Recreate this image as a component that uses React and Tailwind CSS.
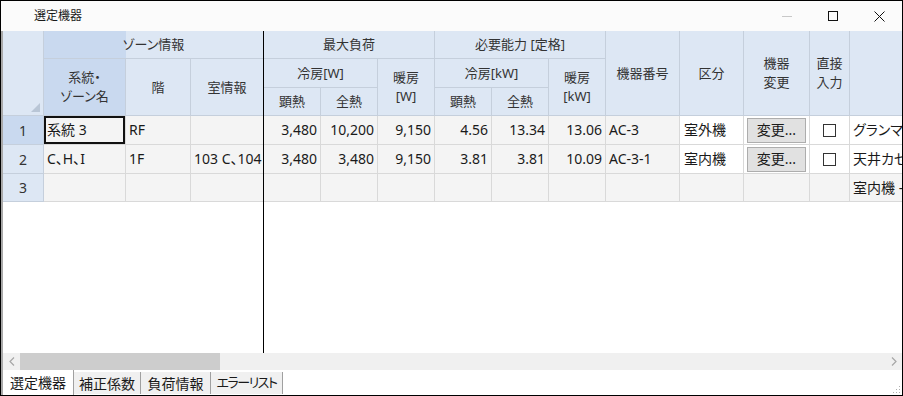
import React from 'react';

const font = "font-['Noto_Sans','Noto_Sans_CJK_JP',sans-serif] [font-feature-settings:'palt']";

function Hd({ children, last, dark, className = '' }) {
    return (
        <div
            className={`flex items-center justify-center text-center border-b border-[#c5cfdc] text-[13px] leading-[19px] text-[#333] whitespace-nowrap ${last ? '' : 'border-r'} ${dark ? 'bg-[#c9d9ef]' : 'bg-[#dde7f4]'} ${className}`}
        >
            {children}
        </div>
    );
}

// row number cell on the left
function RowNo({ n, dark }) {
    return (
        <div className={`border-r border-b border-[#c5cfdc] ${dark ? 'bg-[#c9d9ef]' : 'bg-[#dde7f4]'}`}>
            <div className="w-full h-full flex items-center justify-center text-[14px] text-[#333]">{n}</div>
        </div>
    );
}

function Cell({ children, right, last, white, className = '' }) {
    return (
        <div
            className={`flex items-center px-[3px] border-b border-[#d9d9d9] text-[14px] leading-[18px] text-[#1a1a1a] whitespace-nowrap overflow-hidden ${last ? '' : 'border-r'} ${white ? 'bg-white' : 'bg-[#f4f4f4]'} ${right ? 'justify-end' : ''} ${className}`}
        >
            {children}
        </div>
    );
}

const ChangeButton = () => (
    <div className="flex items-center justify-center w-[62px] h-[25px] bg-[#e1e1e1] border border-[#adadad] text-[14px] leading-none text-[#1a1a1a]">
        変更...
    </div>
);

const Check = () => <div className="w-[13px] h-[13px] border border-[#333] bg-white" />;

const rows = [
    {
        no: '1', name: '系統 3', floor: 'RF', room: '',
        vals: ['3,480', '10,200', '9,150', '4.56', '13.34', '13.06'],
        id: 'AC-3', kind: '室外機', model: 'グランマルチ',
    },
    {
        no: '2', name: 'C、H、I', floor: '1F', room: '103 C、104',
        vals: ['3,480', '3,480', '9,150', '3.81', '3.81', '10.09'],
        id: 'AC-3-1', kind: '室内機', model: '天井カセット',
    },
];

export default function App() {
    return (
        <div className={`w-[903px] h-[396px] border border-black flex flex-col overflow-hidden bg-white ${font}`}>
            {/* title bar */}
            <div className="h-[30px] shrink-0 flex items-center bg-[#fbfbfb]">
                <span className="pl-[33px] text-[12px] text-[#1a1a1a]">選定機器</span>
                <div className="ml-auto flex h-full">
                    <div className="w-[46px] flex items-center justify-center">
                        <svg width="10" height="10" viewBox="0 0 10 10"><path d="M0 5.5h10" stroke="#c8c8c8" strokeWidth="1" /></svg>
                    </div>
                    <div className="w-[46px] flex items-center justify-center">
                        <svg width="10" height="10" viewBox="0 0 10 10"><rect x="0.5" y="0.5" width="9" height="9" fill="none" stroke="#111" strokeWidth="1" /></svg>
                    </div>
                    <div className="w-[46px] flex items-center justify-center">
                        <svg width="11" height="11" viewBox="0 0 11 11"><path d="M0.5 0.5l10 10M10.5 0.5l-10 10" stroke="#111" strokeWidth="1" /></svg>
                    </div>
                </div>
            </div>

            <div className="flex-1 min-h-0 flex flex-col border-l-2 border-[#a9a9a9]">
                {/* grid */}
                <div className="flex-1 min-h-0 flex overflow-hidden">
                    {/* frozen pane */}
                    <div className="shrink-0 border-r border-black">
                        <div className="grid grid-cols-[41px_82px_65px_72px] grid-rows-[28px_29px_28px_29px_29px_28px]">
                            <Hd className="row-span-3 relative">
                                <svg className="absolute right-[3px] bottom-[3px]" width="9" height="9" viewBox="0 0 9 9"><path d="M9 0V9H0Z" fill="#b9c6d6" /></svg>
                            </Hd>
                            <Hd last className="col-span-3 bg-[linear-gradient(to_right,#c9d9ef_82px,#dde7f4_82px)]">ゾーン情報</Hd>
                            <Hd dark className="row-span-2">系統・<br />ゾーン名</Hd>
                            <Hd className="row-span-2">階</Hd>
                            <Hd last className="row-span-2">室情報</Hd>

                            {rows.map((r, i) => (
                                <React.Fragment key={r.no}>
                                    <RowNo n={r.no} dark={i === 0} />
                                    <Cell className={i === 0 ? 'shadow-[inset_0_0_0_2px_#111]' : ''}>{r.name}</Cell>
                                    <Cell>{r.floor}</Cell>
                                    <Cell last>{r.room}</Cell>
                                </React.Fragment>
                            ))}
                            <RowNo n="3" />
                            <Cell />
                            <Cell />
                            <Cell last />
                        </div>
                    </div>

                    {/* scrolling pane */}
                    <div className="flex-1 min-w-0 overflow-hidden">
                        <div className="grid grid-cols-[57px_57px_57px_57px_57px_57px_74px_64px_66px_40px_120px] grid-rows-[28px_29px_28px_29px_29px_28px]">
                            <Hd className="col-span-3">最大負荷</Hd>
                            <Hd className="col-span-3">必要能力 [定格]</Hd>
                            <Hd className="row-span-3">機器番号</Hd>
                            <Hd className="row-span-3">区分</Hd>
                            <Hd className="row-span-3">機器<br />変更</Hd>
                            <Hd className="row-span-3">直接<br />入力</Hd>
                            <Hd className="row-span-3" />
                            <Hd className="col-span-2">冷房[W]</Hd>
                            <Hd className="row-span-2">暖房<br />[W]</Hd>
                            <Hd className="col-span-2">冷房[kW]</Hd>
                            <Hd className="row-span-2">暖房<br />[kW]</Hd>
                            <Hd>顕熱</Hd>
                            <Hd>全熱</Hd>
                            <Hd>顕熱</Hd>
                            <Hd>全熱</Hd>

                            {rows.map((r) => (
                                <React.Fragment key={r.no}>
                                    {r.vals.map((v, j) => (
                                        <Cell key={j} right>{v}</Cell>
                                    ))}
                                    <Cell>{r.id}</Cell>
                                    <Cell white className="pl-[4px]">{r.kind}</Cell>
                                    <Cell white className="justify-center px-0"><ChangeButton /></Cell>
                                    <Cell white className="justify-center"><Check /></Cell>
                                    <Cell white>{r.model}</Cell>
                                </React.Fragment>
                            ))}
                            {Array.from({ length: 10 }).map((_, j) => (
                                <Cell key={j} />
                            ))}
                            <Cell>室内機 - 天井</Cell>
                        </div>
                    </div>
                </div>

                {/* horizontal scrollbar */}
                <div className="h-[17px] shrink-0 flex bg-[#f0f0f0]">
                    <div className="w-[17px] flex items-center justify-center">
                        <svg width="6" height="9" viewBox="0 0 6 9"><path d="M5 0.5L1 4.5L5 8.5" fill="none" stroke="#a6a6a6" strokeWidth="1.2" /></svg>
                    </div>
                    <div className="w-[200px] bg-[#cdcdcd]" />
                    <div className="flex-1" />
                    <div className="w-[17px] flex items-center justify-center">
                        <svg width="6" height="9" viewBox="0 0 6 9"><path d="M1 0.5L5 4.5L1 8.5" fill="none" stroke="#a6a6a6" strokeWidth="1.2" /></svg>
                    </div>
                </div>

                {/* sheet tabs */}
                <div className="h-[25px] shrink-0 flex items-stretch bg-white relative">
                    <div className="w-[71px] flex items-center justify-center border-r border-[#a0a0a0] text-[14px] text-[#1a1a1a]">選定機器</div>
                    <div className="w-[67px] mt-[2px] mb-[1px] flex items-center justify-center border-r border-[#a0a0a0] bg-[#f0f0f0] text-[14px] text-[#1a1a1a]">補正係数</div>
                    <div className="w-[70px] mt-[2px] mb-[1px] flex items-center justify-center border-r border-[#a0a0a0] bg-[#f0f0f0] text-[14px] text-[#1a1a1a]">負荷情報</div>
                    <div className="w-[72px] mt-[2px] mb-[1px] flex items-center justify-center border-r border-[#a0a0a0] bg-[#f0f0f0] text-[13px] tracking-[-1.5px] text-[#1a1a1a] whitespace-nowrap">エラーリスト</div>
                    <svg className="absolute right-[1px] bottom-[1px]" width="10" height="10" viewBox="0 0 10 10">
                        <g fill="#b0b0b0">
                            <rect x="8" y="2" width="1" height="1" />
                            <rect x="5" y="5" width="1" height="1" />
                            <rect x="8" y="5" width="1" height="1" />
                            <rect x="2" y="8" width="1" height="1" />
                            <rect x="5" y="8" width="1" height="1" />
                            <rect x="8" y="8" width="1" height="1" />
                        </g>
                    </svg>
                </div>
            </div>
        </div>
    );
}
